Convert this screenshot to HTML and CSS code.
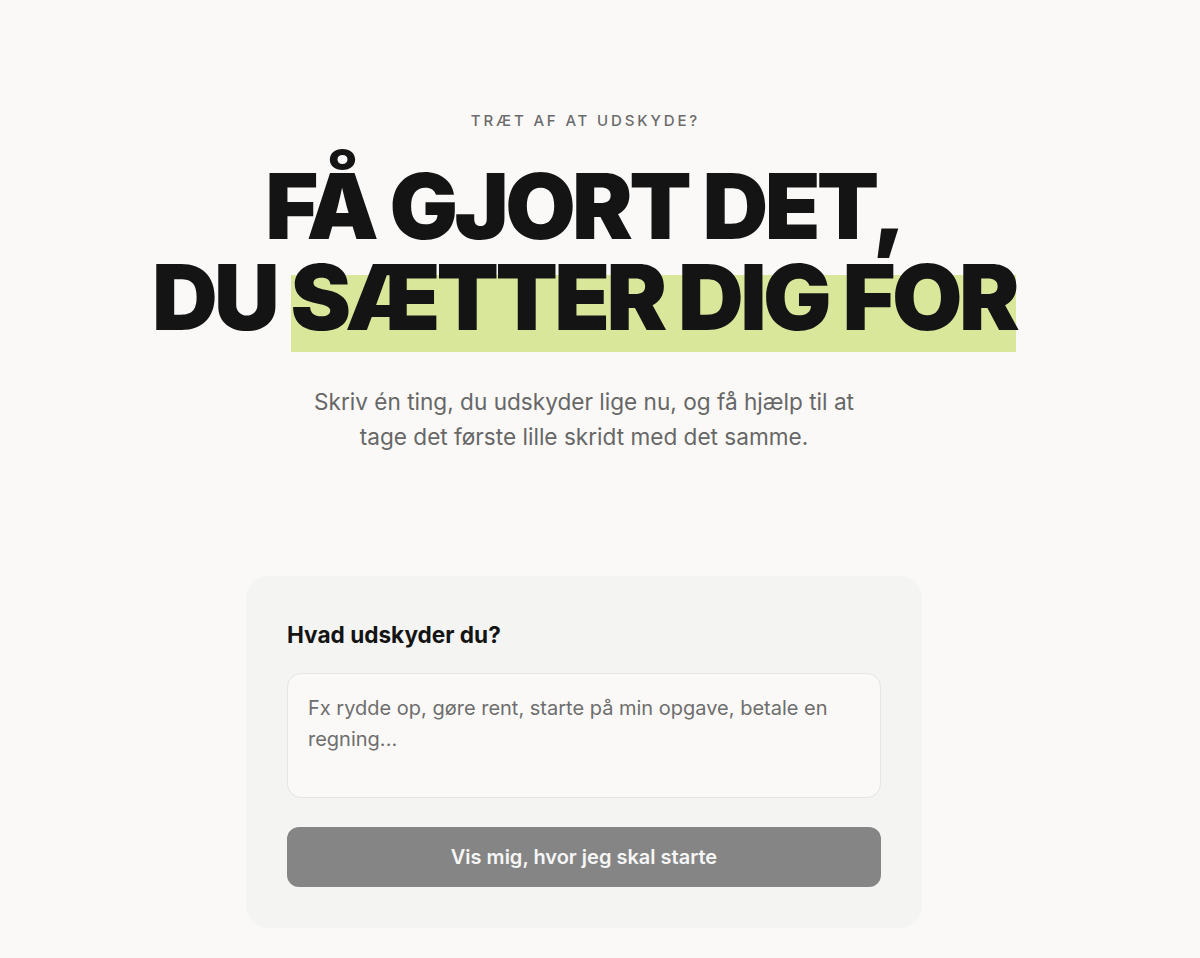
FILE: index.html
```html
<!DOCTYPE html>
<html lang="da">
<head>
<meta charset="utf-8">
<title>Få gjort det</title>
<link rel="stylesheet" href="styles.css">
</head>
<body>
<main class="page">
  <section class="hero">
    <p class="eyebrow">TRÆT AF AT UDSKYDE?</p>
    <h1 class="headline">FÅ GJORT DET,<br>DU <span class="mark">SÆTTER DIG FOR</span></h1>
    <p class="lead">Skriv én ting, du udskyder lige nu, og få hjælp til at tage det første lille skridt med det samme.</p>
  </section>
  <form class="card">
    <label class="card-label" for="task">Hvad udskyder du?</label>
    <textarea id="task" class="field" placeholder="Fx rydde op, gøre rent, starte på min opgave, betale en regning..."></textarea>
    <button type="button" class="btn">Vis mig, hvor jeg skal starte</button>
  </form>
</main>
</body>
</html>
```

FILE: styles.css
```css
html, body {
  margin: 0;
  padding: 0;
  background: #faf9f7;
  overflow: hidden;
}
body {
  font-family: Inter, "Noto Sans", sans-serif;
  color: #141414;
}
.page {
  width: 1168px;
  display: flex;
  flex-direction: column;
  align-items: center;
}
.hero {
  display: flex;
  flex-direction: column;
  align-items: center;
  text-align: center;
  padding-top: 111px;
}
.eyebrow {
  margin: 0;
  font-size: 15px;
  line-height: 20px;
  font-weight: 500;
  letter-spacing: 0.19em;
  color: #6b6b6b;
  padding-left: 0.19em;
}
.headline {
  margin: 30px 0 0;
  font-size: 91px;
  line-height: 91px;
  font-weight: 900;
  letter-spacing: -0.04em;
  color: #141414;
}
.mark {
  background: linear-gradient(to bottom, transparent 30%, #d9e79b 30%);
}
.lead {
  margin: 41px 0 0;
  max-width: 580px;
  font-size: 22.6px;
  line-height: 35px;
  color: #676767;
}
.card {
  margin-top: 122px;
  width: 676px;
  box-sizing: border-box;
  padding: 44px 41px 41px;
  background: #f4f4f2;
  border-radius: 22px;
  display: flex;
  flex-direction: column;
}
.card-label {
  font-size: 22.6px;
  line-height: 30px;
  font-weight: 700;
  color: #141414;
}
.field {
  margin-top: 23px;
  height: 125px;
  box-sizing: border-box;
  padding: 19px 20px;
  border: 1px solid #e4e4e2;
  border-radius: 14px;
  background: #faf9f7;
  font-family: Inter, "Noto Sans", sans-serif;
  font-size: 20px;
  line-height: 31px;
  color: #141414;
  resize: none;
  outline: none;
}
.field::placeholder {
  color: #6e6e6e;
  opacity: 1;
}
.btn {
  margin-top: 29px;
  height: 60px;
  border: none;
  border-radius: 12px;
  background: #858585;
  color: #f6f6f6;
  font-family: Inter, "Noto Sans", sans-serif;
  font-size: 20px;
  font-weight: 600;
}
```
